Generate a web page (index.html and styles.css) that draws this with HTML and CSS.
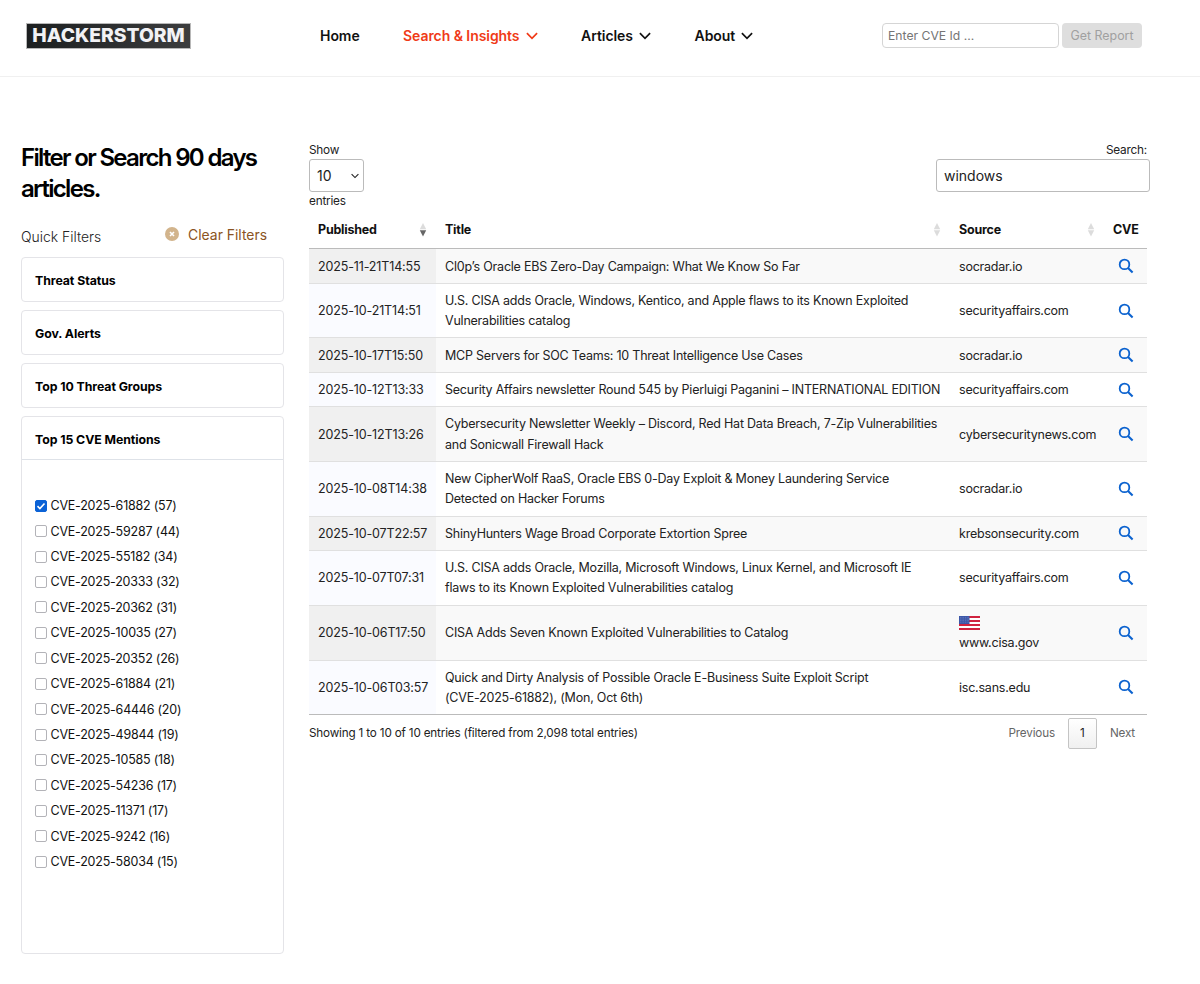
FILE: index.html
```html
<!DOCTYPE html>
<html lang="en">
<head>
  <meta charset="UTF-8" />
  <meta name="viewport" content="width=device-width, initial-scale=1" />
  <title>Hackerstorm – Search Articles</title>
  <link rel="stylesheet" href="styles.css">
</head>
<body>

<svg width="0" height="0" class="sprite">
  <symbol id="chevron" viewBox="0 0 12 8"><path d="M.9 1.2 6 6.3l5.1-5.1" fill="none" stroke="currentColor" stroke-width="1.7" /></symbol>
  <symbol id="lens" viewBox="0 0 16 16"><circle cx="6.5" cy="6.4" r="4.8" fill="none" stroke="currentColor" stroke-width="1.8" /><path d="M10 10l4.6 4.5" fill="none" stroke="currentColor" stroke-width="2.1" /></symbol>
  <symbol id="sort" viewBox="0 0 8 14"><path class="up" d="M4 0l3.2 6.3H.8z" /><path class="down" d="M.8 7.2h6.4L4 13.5z" /></symbol>
</svg>

<header>
  <a class="logo" href="#">HACKERSTORM</a>
  <nav>
    <a href="#">Home</a>
    <a href="#" class="active">Search &amp; Insights <svg><use href="#chevron" /></svg></a>
    <a href="#">Articles <svg><use href="#chevron" /></svg></a>
    <a href="#">About <svg><use href="#chevron" /></svg></a>
  </nav>
  <form class="cve-form">
    <input type="text" placeholder="Enter CVE Id ..." />
    <button type="button" disabled>Get Report</button>
  </form>
</header>

<main>
  <aside>
    <h1>Filter or Search 90 days articles.</h1>
    <div class="quick">
      <span>Quick Filters</span>
      <a href="#" class="clear"><svg viewBox="0 0 14 14"><circle cx="7" cy="7" r="7" fill="#d2b48c" /><path d="M5 5l4 4M9 5l-4 4" stroke="#fff" stroke-width="1.6" /></svg>Clear Filters</a>
    </div>
    <div class="panel"><h2>Threat Status</h2></div>
    <div class="panel"><h2>Gov. Alerts</h2></div>
    <div class="panel"><h2>Top 10 Threat Groups</h2></div>
    <div class="panel open">
      <h2>Top 15 CVE Mentions</h2>
      <div class="options">
        <label><input type="checkbox" checked />CVE-2025-61882 (57)</label>
        <label><input type="checkbox" />CVE-2025-59287 (44)</label>
        <label><input type="checkbox" />CVE-2025-55182 (34)</label>
        <label><input type="checkbox" />CVE-2025-20333 (32)</label>
        <label><input type="checkbox" />CVE-2025-20362 (31)</label>
        <label><input type="checkbox" />CVE-2025-10035 (27)</label>
        <label><input type="checkbox" />CVE-2025-20352 (26)</label>
        <label><input type="checkbox" />CVE-2025-61884 (21)</label>
        <label><input type="checkbox" />CVE-2025-64446 (20)</label>
        <label><input type="checkbox" />CVE-2025-49844 (19)</label>
        <label><input type="checkbox" />CVE-2025-10585 (18)</label>
        <label><input type="checkbox" />CVE-2025-54236 (17)</label>
        <label><input type="checkbox" />CVE-2025-11371 (17)</label>
        <label><input type="checkbox" />CVE-2025-9242 (16)</label>
        <label><input type="checkbox" />CVE-2025-58034 (15)</label>
      </div>
    </div>
  </aside>

  <section class="results">
    <div class="controls">
      <label class="length"><span>Show</span>
        <span class="select-wrap">
          <select><option>10</option><option>25</option><option>50</option></select>
          <svg><use href="#chevron" /></svg>
        </span>
        entries
      </label>
      <label class="search"><span>Search:</span>
        <input type="text" value="windows" />
      </label>
    </div>

    <table>
      <colgroup><col class="c-date" /><col class="c-title" /><col class="c-source" /><col class="c-cve" /></colgroup>
      <thead>
        <tr>
          <th><div>Published <svg class="sorted"><use href="#sort" /></svg></div></th>
          <th><div>Title <svg><use href="#sort" /></svg></div></th>
          <th><div>Source <svg><use href="#sort" /></svg></div></th>
          <th>CVE</th>
        </tr>
      </thead>
      <tbody>
        <tr>
          <td>2025-11-21T14:55</td>
          <td>Cl0p’s Oracle EBS Zero-Day Campaign: What We Know So Far</td>
          <td>socradar.io</td>
          <td><svg><use href="#lens" /></svg></td>
        </tr>
        <tr>
          <td>2025-10-21T14:51</td>
          <td>U.S. CISA adds Oracle, Windows, Kentico, and Apple flaws to its Known Exploited<br />Vulnerabilities catalog</td>
          <td>securityaffairs.com</td>
          <td><svg><use href="#lens" /></svg></td>
        </tr>
        <tr>
          <td>2025-10-17T15:50</td>
          <td>MCP Servers for SOC Teams: 10 Threat Intelligence Use Cases</td>
          <td>socradar.io</td>
          <td><svg><use href="#lens" /></svg></td>
        </tr>
        <tr>
          <td>2025-10-12T13:33</td>
          <td>Security Affairs newsletter Round 545 by Pierluigi Paganini – INTERNATIONAL EDITION</td>
          <td>securityaffairs.com</td>
          <td><svg><use href="#lens" /></svg></td>
        </tr>
        <tr>
          <td>2025-10-12T13:26</td>
          <td>Cybersecurity Newsletter Weekly – Discord, Red Hat Data Breach, 7-Zip Vulnerabilities<br />and Sonicwall Firewall Hack</td>
          <td>cybersecuritynews.com</td>
          <td><svg><use href="#lens" /></svg></td>
        </tr>
        <tr>
          <td>2025-10-08T14:38</td>
          <td>New CipherWolf RaaS, Oracle EBS 0-Day Exploit &amp; Money Laundering Service<br />Detected on Hacker Forums</td>
          <td>socradar.io</td>
          <td><svg><use href="#lens" /></svg></td>
        </tr>
        <tr>
          <td>2025-10-07T22:57</td>
          <td>ShinyHunters Wage Broad Corporate Extortion Spree</td>
          <td>krebsonsecurity.com</td>
          <td><svg><use href="#lens" /></svg></td>
        </tr>
        <tr>
          <td>2025-10-07T07:31</td>
          <td>U.S. CISA adds Oracle, Mozilla, Microsoft Windows, Linux Kernel, and Microsoft IE<br />flaws to its Known Exploited Vulnerabilities catalog</td>
          <td>securityaffairs.com</td>
          <td><svg><use href="#lens" /></svg></td>
        </tr>
        <tr>
          <td>2025-10-06T17:50</td>
          <td>CISA Adds Seven Known Exploited Vulnerabilities to Catalog</td>
          <td>
            <svg class="flag" viewBox="0 0 21 14">
              <rect width="21" height="14" fill="#fff" />
              <path d="M0 1h21M0 5h21M0 9h21M0 13h21" stroke="#d0233f" stroke-width="1.8" />
              <rect width="10.5" height="8" fill="#3c57a8" />
              <path d="M1 1.4h9M1 3h9M1 4.6h9M1 6.2h9" stroke="#8799d0" stroke-width=".6" stroke-dasharray=".7 1" />
            </svg>
            www.cisa.gov
          </td>
          <td><svg><use href="#lens" /></svg></td>
        </tr>
        <tr>
          <td>2025-10-06T03:57</td>
          <td>Quick and Dirty Analysis of Possible Oracle E-Business Suite Exploit Script<br />(CVE-2025-61882), (Mon, Oct 6th)</td>
          <td>isc.sans.edu</td>
          <td><svg><use href="#lens" /></svg></td>
        </tr>
      </tbody>
    </table>

    <div class="table-footer">
      <span>Showing 1 to 10 of 10 entries (filtered from 2,098 total entries)</span>
      <div class="pages">
        <a class="disabled">Previous</a>
        <a class="current">1</a>
        <a class="disabled">Next</a>
      </div>
    </div>
  </section>
</main>

</body>
</html>
```
FILE: styles.css
```css
* {
  box-sizing: border-box;
}

body {
  margin: 0;
  font-family: Inter, sans-serif;
  font-size: 12.5px;
  letter-spacing: -0.22px;
  color: #222;
  background: #fff;
}

a {
  color: inherit;
  text-decoration: none;
}

.sprite {
  display: block;
}

header {
  display: flex;
  align-items: flex-start;
  height: 77px;
  padding: 22px 58px 0 26px;
  border-bottom: 1px solid #f0f0f0;
}

.logo {
  width: 165px;
  height: 26px;
  margin-top: 1px;
  border: 1px solid #b8b8b8;
  background: linear-gradient(90deg, #1c1f20, #3c3d3e);
  color: #f2f2f5;
  font-weight: 800;
  font-size: 19.3px;
  line-height: 23px;
  letter-spacing: 0;
  text-align: center;
  white-space: nowrap;
}

nav {
  display: flex;
  gap: 43.4px;
  margin-left: 129px;
  font-size: 14px;
  font-weight: 600;
  line-height: 27px;
  letter-spacing: -0.06px;
  color: #111;
  white-space: nowrap;
}

nav .active {
  color: #f03a17;
}

nav svg {
  width: 12px;
  height: 8px;
  margin: 0 0 1px 2.7px;
}

.cve-form {
  display: flex;
  gap: 3px;
  margin: 1px 0 0 auto;
}

.cve-form input {
  width: 177px;
  height: 25px;
  padding: 0 5px;
  border: 1px solid #d5d5d5;
  border-radius: 4px;
  font: 12.2px Inter, sans-serif;
}

.cve-form input::placeholder {
  color: #757575;
}

.cve-form button {
  width: 80px;
  height: 25px;
  padding: 0;
  border: 0;
  border-radius: 4px;
  background: #dedede;
  color: #a0a0a0;
  font: 12.4px Inter, sans-serif;
}

main {
  display: flex;
  gap: 25px;
  padding: 65px 50px 0 21px;
}

aside {
  width: 263px;
}

h1 {
  margin: 0;
  font-size: 24px;
  font-weight: 600;
  line-height: 31px;
  letter-spacing: -1.68px;
  color: #000;
}

.quick {
  display: flex;
  justify-content: space-between;
  margin-top: 18px;
  padding-right: 17px;
  height: 35px;
  font-size: 13.9px;
  font-weight: 300;
  line-height: 26px;
  letter-spacing: 0;
}

.quick > span {
  padding-top: 2px;
}

.clear {
  display: flex;
  gap: 9px;
  font-size: 13.9px;
  font-weight: 400;
  color: #8b5423;
}

.clear svg {
  width: 14px;
  height: 14px;
  margin-top: 5px;
}

.panel {
  height: 45px;
  margin-bottom: 8px;
  border: 1px solid #e4e4e8;
  border-radius: 4px;
}

.panel h2 {
  margin: 0;
  padding: 0 13px;
  height: 43px;
  font-size: 12.3px;
  font-weight: 700;
  line-height: 45px;
  letter-spacing: -0.06px;
  color: #000;
}

.panel.open {
  height: 538px;
}

.panel.open h2 {
  border-bottom: 1px solid #dee2e8;
}

.options {
  padding: 33px 13px 0;
}

.options label {
  display: flex;
  align-items: center;
  gap: 3.5px;
  height: 25.43px;
  color: #111;
}

.options input {
  appearance: none;
  width: 12px;
  height: 12px;
  margin: 0;
  border: 1px solid #b3b3b8;
  border-radius: 2px;
  background: #fff;
}

.options input:checked {
  border-color: #0b62d6;
  background: #0b62d6 url("data:image/svg+xml,%3Csvg xmlns='http://www.w3.org/2000/svg' viewBox='0 0 10 10'%3E%3Cpath d='M1.5 5.2l2.4 2.3 4.6-5' fill='none' stroke='white' stroke-width='1.6'/%3E%3C/svg%3E");
}

.results {
  flex: 1;
}

.controls {
  display: flex;
  justify-content: space-between;
  font-size: 11.8px;
  line-height: 17px;
}

.controls label > span:first-child {
  height: 17px;
  line-height: 16px;
}

.length {
  display: flex;
  flex-direction: column;
  line-height: 18px;
}

.select-wrap {
  position: relative;
  width: 55px;
}

.select-wrap select {
  appearance: none;
  display: block;
  width: 55px;
  height: 33px;
  padding: 0 7px;
  border: 1px solid #bbb;
  border-radius: 3px;
  background: #fff;
  font: 14px Inter, sans-serif;
  color: #222;
}

.select-wrap svg {
  position: absolute;
  right: 5px;
  top: 14px;
  width: 8px;
  height: 6px;
}

.search {
  display: flex;
  flex-direction: column;
  text-align: right;
}

.search span {
  padding-right: 3px;
}

.search input {
  width: 214px;
  height: 33px;
  padding: 0 7px;
  border: 1px solid #bbb;
  border-radius: 3px;
  font: 14px Inter, sans-serif;
  color: #222;
}

table {
  width: 838px;
  table-layout: fixed;
  border-collapse: separate;
  border-spacing: 0;
  line-height: 20.2px;
  border-bottom: 1px solid #bbb;
}

.c-date {
  width: 127px;
}

.c-title {
  width: 514px;
}

.c-source {
  width: 154px;
}

.c-cve {
  width: 43px;
}

th {
  height: 39px;
  padding: 3px 9px 1px 9px;
  border-bottom: 1px solid #bbb;
  text-align: left;
  font-weight: 700;
  color: #111;
}

th div {
  display: flex;
  align-items: center;
  justify-content: space-between;
}

th svg {
  width: 8px;
  height: 14px;
  color: #dcdcdc;
}

th svg.sorted {
  color: #666;
}

.up {
  fill: #dcdcdc;
}

.down {
  fill: currentColor;
}

td {
  padding: 7.1px 0 6.15px 9px;
  border-top: 1px solid #e0e0e0;
  white-space: nowrap;
}

td:first-child {
  letter-spacing: -0.14px;
}

tbody tr:first-child td {
  border-top: 0;
  padding-top: 7.5px;
}

tbody tr:nth-child(odd) {
  background: #f9f9f9;
}

tbody tr:nth-child(odd) td:first-child {
  background: #f0f0f0;
}

tbody tr:nth-child(even) td:first-child {
  background: #fafbff;
}

td:last-child {
  color: #0b62cf;
}

td:last-child svg {
  display: block;
  width: 16px;
  height: 16px;
  margin: -1px 0 0 4.5px;
}

.flag {
  display: block;
  width: 21px;
  height: 14px;
  margin: 3px 0 3.4px;
}

th:last-child {
  padding-right: 0;
}

.table-footer {
  display: flex;
  justify-content: space-between;
  width: 838px;
  padding-top: 2px;
  font-size: 11.7px;
  line-height: 32px;
  letter-spacing: -0.17px;
}

.pages {
  display: flex;
}

.pages a {
  padding: 0 12px;
}

.pages .disabled {
  color: #666;
}

.pages .current {
  width: 29px;
  padding: 0;
  margin: 1px 1px 0;
  height: 31px;
  line-height: 29px;
  border: 1px solid #c4c4c4;
  border-radius: 2px;
  background: linear-gradient(#fff, #f0f0f0);
  text-align: center;
}
```
